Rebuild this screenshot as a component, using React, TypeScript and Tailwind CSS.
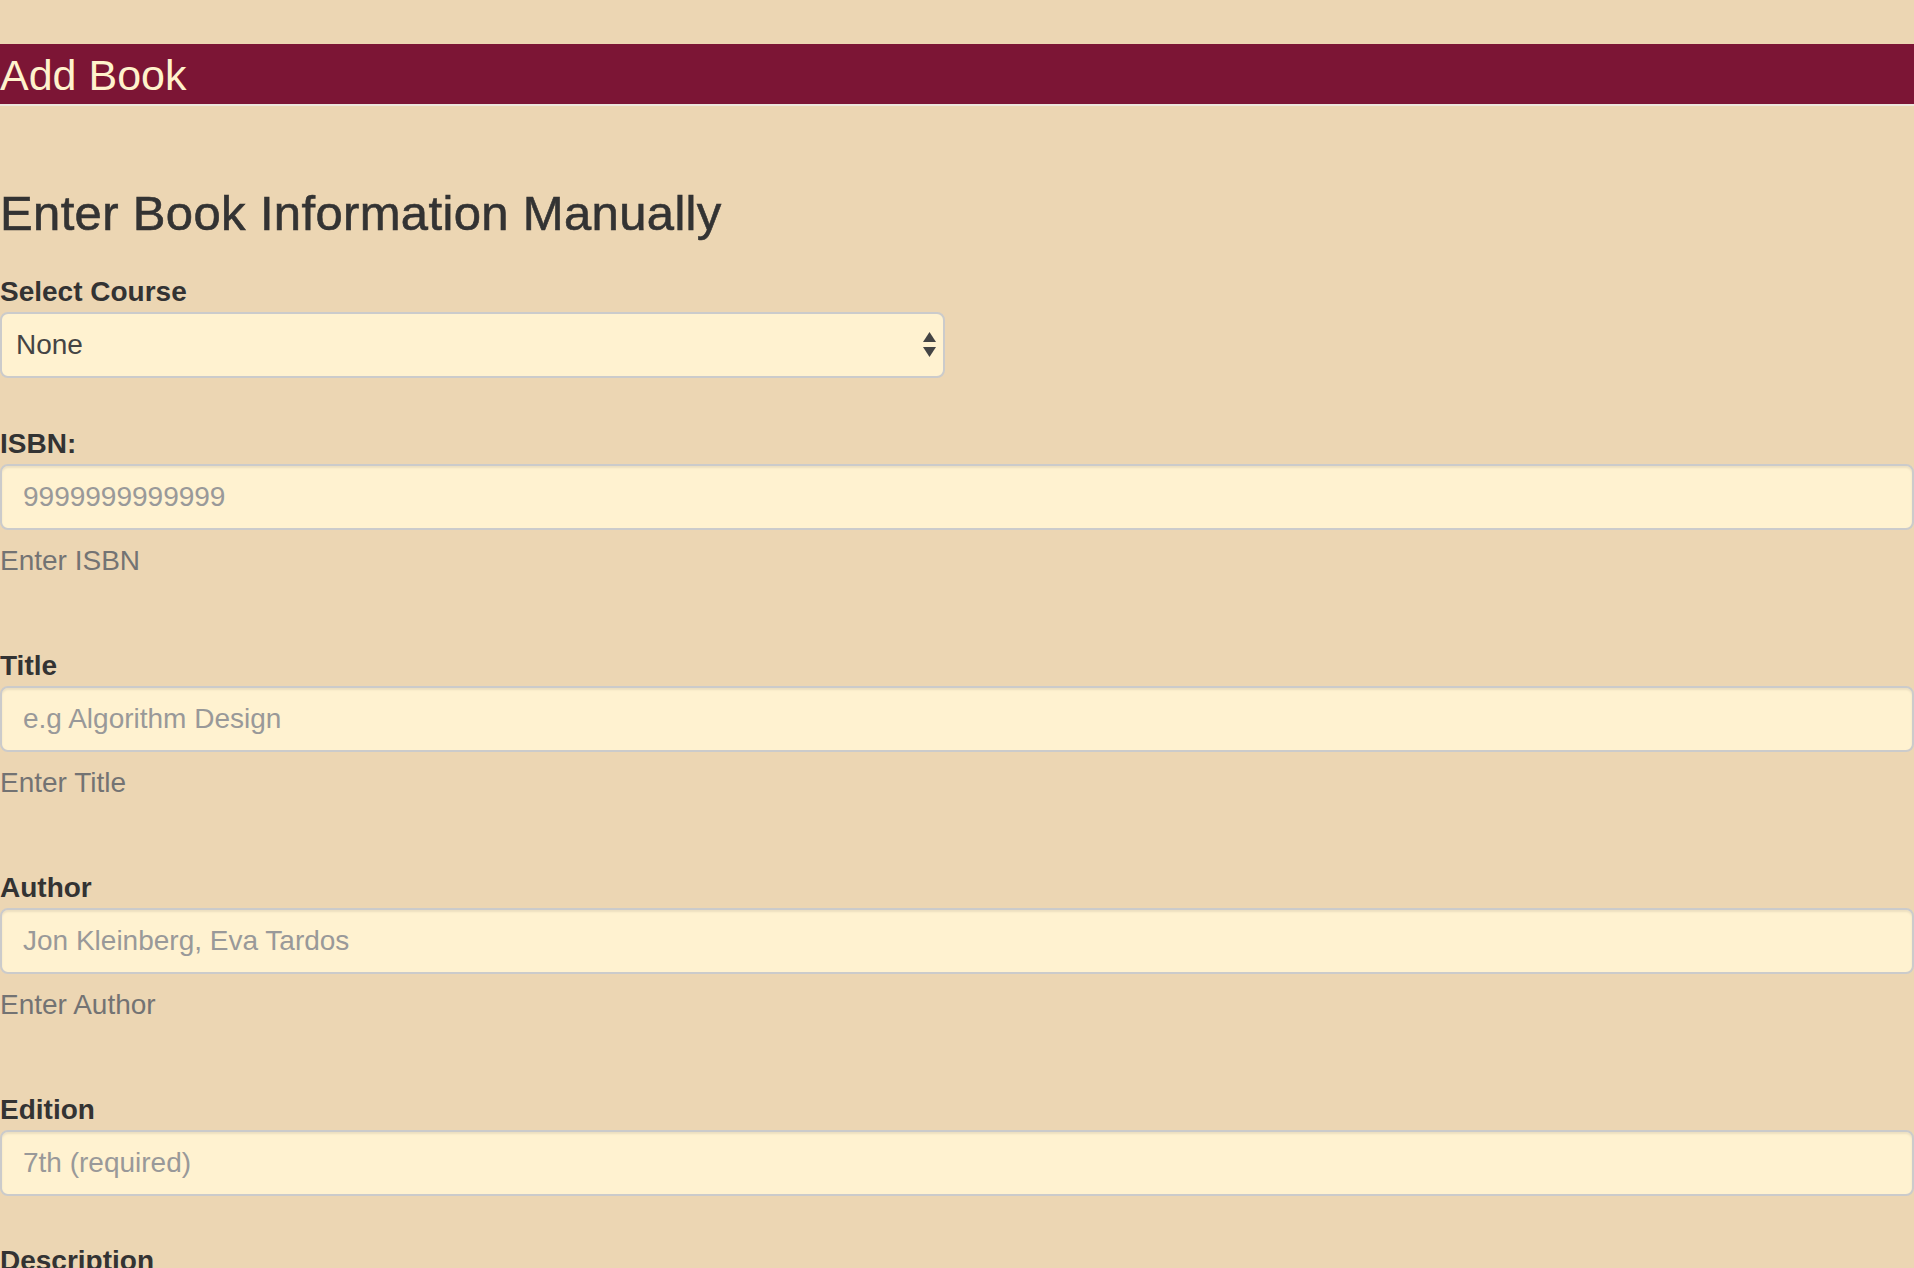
const fields = [
  { id: "isbn", label: "ISBN:", placeholder: "9999999999999", help: "Enter ISBN" },
  { id: "title", label: "Title", placeholder: "e.g Algorithm Design", help: "Enter Title" },
  { id: "author", label: "Author", placeholder: "Jon Kleinberg, Eva Tardos", help: "Enter Author" },
  { id: "edition", label: "Edition", placeholder: "7th (required)", help: "" },
];

const inputClass =
  "block w-full h-[66px] px-[21px] rounded-[8px] border-2 border-[#cbcbcb] bg-[#FFF2D0] text-[28px] text-[#555] outline-none shadow-[inset_0_2px_2px_rgba(0,0,0,0.075)] placeholder:text-[#999]";

export default function App() {
  return (
    <div className="min-h-screen bg-[#ECD6B3] pt-[44px] font-['Liberation_Sans',Arial,sans-serif] text-[#333]">
      <header className="h-[62px] border-b-2 border-[#ece6dc] bg-[#7C1535]">
        <h1 className="pt-[3px] text-[43px] leading-[56px] text-[#FFF2CC]">Add Book</h1>
      </header>

      <main>
        <h2 className="mt-[81px] text-[49px] leading-[53px] tracking-[0.35px] font-medium [-webkit-text-stroke:0.6px_#333]">
          Enter Book Information Manually
        </h2>

        <form className="mt-[37px]">
          <div className="mb-[51px]">
            <label htmlFor="course" className="block mb-[5px] text-[28px] leading-[30px] font-bold">
              Select Course
            </label>
            <div className="relative w-[945px]">
              <select
                id="course"
                className="block w-full h-[66px] appearance-none pl-[14px] pr-[40px] rounded-[8px] border-2 border-[#cbcbcb] bg-[#FFF2D0] text-[28px] text-[#444] outline-none"
              >
                <option>None</option>
              </select>
              <svg
                className="pointer-events-none absolute right-[9px] top-[20px]"
                width="13"
                height="25"
                viewBox="0 0 13 25"
              >
                <polygon points="6.5,0 13,10 0,10" fill="#444" />
                <polygon points="0,15 13,15 6.5,25" fill="#444" />
              </svg>
            </div>
          </div>

          {fields.map((f) => (
            <div key={f.id} className="mb-[50px]">
              <label htmlFor={f.id} className="block mb-[5px] text-[28px] leading-[30px] font-bold">
                {f.label}
              </label>
              <input id={f.id} type="text" placeholder={f.placeholder} className={inputClass} />
              {f.help && (
                <p className="mt-[16px] pb-[25px] text-[28px] leading-[30px] text-[#737373]">{f.help}</p>
              )}
            </div>
          ))}

          <div className="mb-[50px]">
            <label htmlFor="description" className="block mb-[5px] text-[28px] leading-[30px] font-bold">
              Description
            </label>
            <textarea id="description" rows={4} className={inputClass + " h-auto py-[12px] resize-none"} />
          </div>
        </form>
      </main>
    </div>
  );
}
